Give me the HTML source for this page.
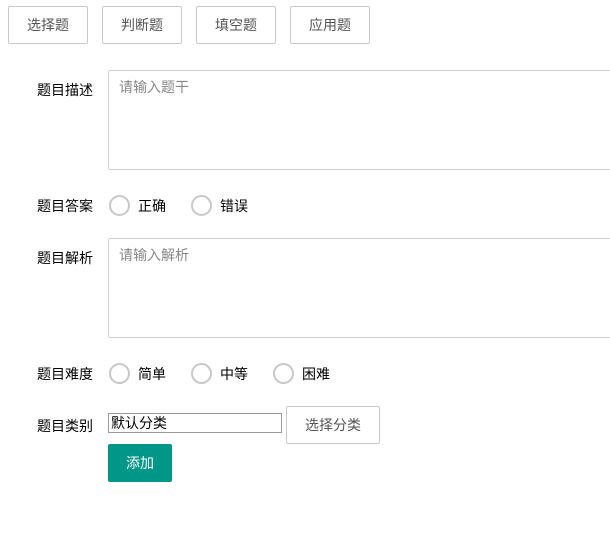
<!DOCTYPE html><html><head><meta charset="utf-8"><style>
body{margin:0;background:#fff;font-family:"Liberation Sans","Noto Sans CJK SC",sans-serif;font-size:14px;color:#333;position:relative;width:610px;height:533px;overflow:hidden}
.a{position:absolute}
.btn{position:absolute;top:6px;height:36px;width:78px;border:1px solid #c9c9c9;border-radius:2px;text-align:center;line-height:36px;color:#555;background:#fff}
.lbl{position:absolute;left:0;width:93px;text-align:right;color:#000}
.ta{position:absolute;left:108px;width:520px;height:98px;border:1px solid #d2d2d2;border-radius:2px;color:#888}
.ta span{position:absolute;left:10px;top:6px}
.r{position:absolute;width:17px;height:17px;border:2px solid #c8c8c8;border-radius:50%}
.rt{position:absolute;color:#000}
</style></head><body>
<div class="btn" style="left:8px">选择题</div>
<div class="btn" style="left:102px">判断题</div>
<div class="btn" style="left:196px">填空题</div>
<div class="btn" style="left:290px">应用题</div>
<div class="lbl" style="top:80px">题目描述</div>
<div class="ta" style="top:70px"><span>请输入题干</span></div>
<div class="lbl" style="top:196px">题目答案</div>
<div class="r" style="left:109px;top:195px"></div><div class="rt" style="left:138px;top:196px">正确</div>
<div class="r" style="left:191px;top:195px"></div><div class="rt" style="left:220px;top:196px">错误</div>
<div class="lbl" style="top:248px">题目解析</div>
<div class="ta" style="top:238px"><span>请输入解析</span></div>
<div class="lbl" style="top:364px">题目难度</div>
<div class="r" style="left:109px;top:363px"></div><div class="rt" style="left:138px;top:364px">简单</div>
<div class="r" style="left:191px;top:363px"></div><div class="rt" style="left:220px;top:364px">中等</div>
<div class="r" style="left:273px;top:363px"></div><div class="rt" style="left:302px;top:364px">困难</div>
<div class="lbl" style="top:416px">题目类别</div>
<div class="a" style="left:108px;top:413px;width:170px;height:18px;border:1px solid #999;color:#000;line-height:18px;padding-left:2px;box-sizing:content-box">默认分类</div>
<div class="a" style="left:286px;top:406px;width:92px;height:36px;border:1px solid #c9c9c9;border-radius:2px;text-align:center;line-height:36px;color:#555">选择分类</div>
<div class="a" style="left:108px;top:444px;width:64px;height:38px;background:#009688;border-radius:2px;color:#fff;text-align:center;line-height:38px">添加</div>
</body></html>
